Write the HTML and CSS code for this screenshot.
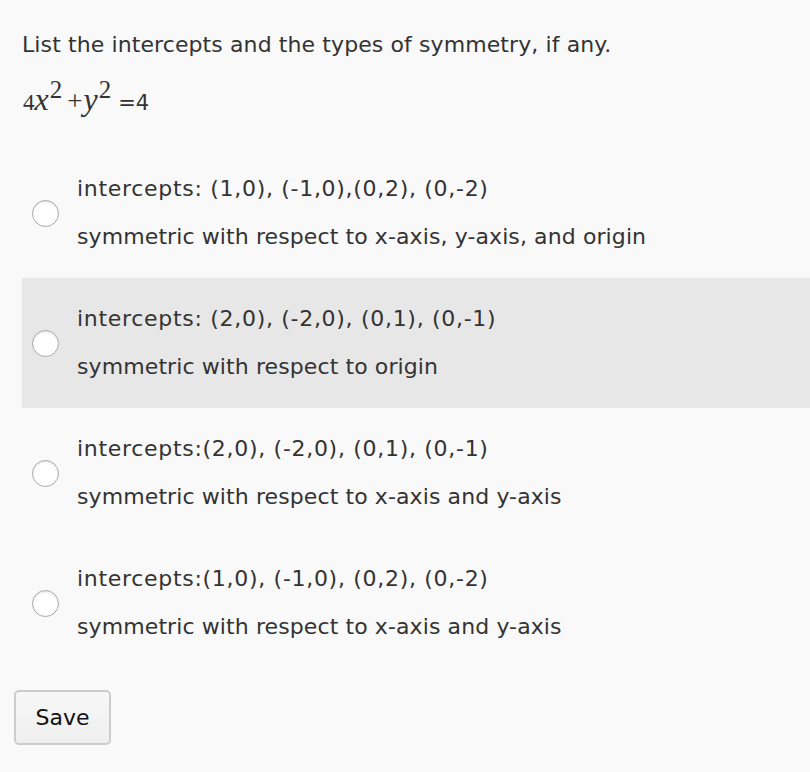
FILE: index.html
```html
<!DOCTYPE html>
<html>
<head>
<meta charset="utf-8">
<link rel="stylesheet" href="styles.css">
</head>
<body>
<div class="page">
  <p class="question">List the intercepts and the types of symmetry, if any.</p>
  <p class="equation"><span class="num">4</span><span class="var">x</span><sup>2</sup><span class="op">+</span><span class="var">y</span><sup>2</sup><span class="eq">=4</span></p>
  <div class="answers">
    <label class="answer">
      <span class="radio"></span>
      <span class="text">
        <span class="line pts">intercepts: (1,0), (-1,0),(0,2), (0,-2)</span>
        <span class="line">symmetric with respect to x-axis, y-axis, and origin</span>
      </span>
    </label>
    <label class="answer hover">
      <span class="radio"></span>
      <span class="text">
        <span class="line pts">intercepts: (2,0), (-2,0), (0,1), (0,-1)</span>
        <span class="line">symmetric with respect to origin</span>
      </span>
    </label>
    <label class="answer">
      <span class="radio"></span>
      <span class="text">
        <span class="line pts">intercepts:(2,0), (-2,0), (0,1), (0,-1)</span>
        <span class="line">symmetric with respect to x-axis and y-axis</span>
      </span>
    </label>
    <label class="answer">
      <span class="radio"></span>
      <span class="text">
        <span class="line pts">intercepts:(1,0), (-1,0), (0,2), (0,-2)</span>
        <span class="line">symmetric with respect to x-axis and y-axis</span>
      </span>
    </label>
  </div>
  <button class="save">Save</button>
</div>
</body>
</html>
```
FILE: styles.css
```css
html, body {
  margin: 0;
  padding: 0;
  background: #f9f9f9;
}
body {
  font-family: "DejaVu Sans", Verdana, sans-serif;
  color: #333;
}
.page {
  padding: 30px 0 0 0;
}
.question {
  margin: 0 0 0 22px;
  font-size: 22px;
  line-height: 30px;
  letter-spacing: 0.1px;
  white-space: nowrap;
}
.equation {
  margin: 24px 0 0 23px;
  font-size: 20px;
  line-height: 30px;
  height: 30px;
  white-space: nowrap;
}
.equation .num {
  font-family: "Liberation Serif", "Times New Roman", serif;
  font-size: 23px;
}
.equation .var {
  font-family: "Liberation Serif", "Times New Roman", serif;
  font-style: italic;
  font-size: 32px;
}
.equation sup {
  font-family: "Liberation Serif", "Times New Roman", serif;
  font-size: 25px;
  vertical-align: 12px;
  line-height: 0;
  margin-left: 1px;
}
.equation .op {
  font-family: "Liberation Serif", serif;
  font-size: 27px;
  margin: 0 1px 0 5px;
}
.equation .eq {
  font-size: 21px;
  margin-left: 7px;
}
.answers {
  margin-top: 34px;
  display: flex;
  flex-direction: column;
}
.answer {
  margin-left: 22px;
  height: 130px;
  display: flex;
  align-items: center;
}
.answer.hover {
  background: #e7e7e7;
}
.radio {
  width: 25px;
  height: 25px;
  border-radius: 50%;
  border: 1px solid #a9a9a9;
  background: #fff;
  box-shadow: inset 0 1px 2px rgba(0,0,0,0.12);
  margin-left: 10px;
  flex: none;
}
.text {
  display: flex;
  flex-direction: column;
  gap: 18px;
  margin-left: 18px;
}
.line {
  font-size: 22px;
  line-height: 30px;
  letter-spacing: 0.1px;
  white-space: nowrap;
}
.line.pts {
  letter-spacing: 0.7px;
}
.save {
  margin: 22px 0 0 14px;
  width: 97px;
  height: 55px;
  border: 2px solid #ccc;
  border-radius: 5px;
  background: linear-gradient(#f7f7f7, #efefef);
  font-family: "DejaVu Sans", Verdana, sans-serif;
  font-size: 22px;
  color: #111;
}
```
